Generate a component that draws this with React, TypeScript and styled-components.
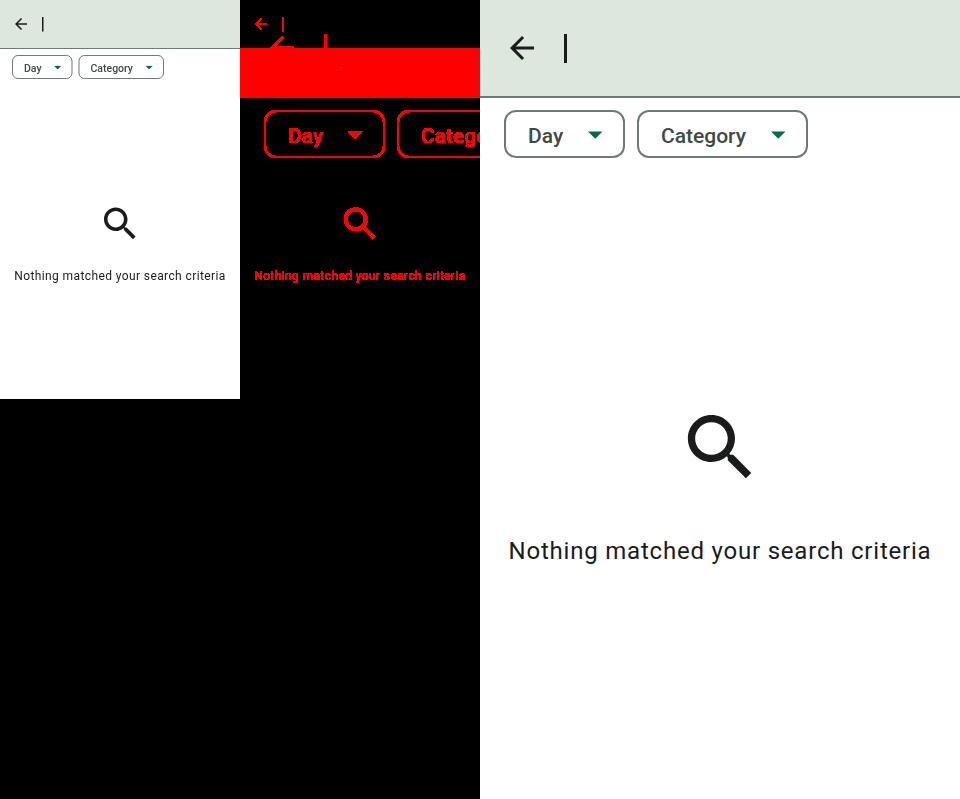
import React from "react";
import styled, { createGlobalStyle, ThemeProvider } from "styled-components";

const GlobalStyle = createGlobalStyle`
  body { margin: 0; background: #000; overflow: hidden; }
  * { box-sizing: border-box; }
`;

const plain = {
  page: "#fff",
  bar: "#dde7de",
  line: "#707973",
  ink: "#191c1a",
  label: "#404943",
  accent: "#006c4e",
};

const marked = {
  page: "transparent",
  bar: "transparent",
  line: "#f00",
  ink: "#f00",
  label: "#f00",
  accent: "#f00",
};

const Board = styled.main`
  display: grid;
  grid-template-columns: 240px 240px 480px;
  width: 960px;
  height: 799px;
  background: #000;
`;

const Pane = styled.section<{ $height: number }>`
  height: ${(p) => p.$height}px;
  overflow: hidden;
`;

const DiffPane = styled(Pane)`
  display: grid;
  grid-template: 799px / 240px;
  background: #000;
`;

const Layer = styled.div<{ $height: number }>`
  grid-area: 1 / 1;
  height: ${(p) => p.$height}px;
  overflow: hidden;
  filter: url(#solid-alpha);
`;

const Band = styled.div`
  grid-area: 1 / 1;
  margin-top: 48px;
  height: 50px;
  background: #f00;
  z-index: 1;
`;

const Speck = styled.div`
  width: 1px;
  height: 1px;
  margin: 23px 0 0 98px;
  background: #000;
`;

const FilterDefs = styled.svg`
  position: absolute;
  width: 0;
  height: 0;
`;

const Screen = styled.div<{ $scale: number }>`
  width: 480px;
  height: 799px;
  background: ${(p) => p.theme.page};
  font-family: Roboto, "Liberation Sans", sans-serif;
  transform: scale(${(p) => p.$scale});
  transform-origin: 0 0;
`;

const SearchBar = styled.header`
  display: flex;
  align-items: center;
  height: 98px;
  padding-left: 24px;
  background: ${(p) => p.theme.bar};
  border-bottom: 2px solid ${(p) => p.theme.line};
`;

const BackIcon = styled.svg`
  width: 36px;
  height: 36px;
  fill: ${(p) => p.theme.ink};
`;

const Cursor = styled.div`
  width: 3px;
  height: 29px;
  margin: 1px 0 0 24px;
  background: ${(p) => p.theme.ink};
`;

const Filters = styled.div`
  display: flex;
  gap: 12px;
  height: 60px;
  padding: 12px 24px 0;
`;

const Chip = styled.button<{ $width: number }>`
  display: flex;
  align-items: center;
  justify-content: space-between;
  flex: none;
  width: ${(p) => p.$width}px;
  height: 48px;
  padding: 3px 20px 0 22px;
  border: 2px solid ${(p) => p.theme.line};
  border-radius: 12px;
  background: transparent;
  color: ${(p) => p.theme.label};
  font: 500 21px/30px Roboto, "Liberation Sans", sans-serif;
  letter-spacing: 0;
`;

const Caret = styled.svg`
  width: 15px;
  height: 8px;
  margin-top: -2px;
  fill: ${(p) => p.theme.accent};
`;

const Empty = styled.div`
  display: flex;
  flex-direction: column;
  align-items: center;
  padding-top: 246px;
`;

const SearchIcon = styled.svg`
  width: 87px;
  height: 87px;
  fill: ${(p) => p.theme.ink};
`;

const Message = styled.p`
  margin: 42.4px 0 0;
  color: ${(p) => p.theme.ink};
  font-size: 24px;
  line-height: 36px;
  letter-spacing: 0.79px;
  white-space: nowrap;
`;

function FilterChip({ label, width }: { label: string; width: number }) {
  return (
    <Chip $width={width}>
      {label}
      <Caret viewBox="0 0 15 8">
        <path d="M0 0.5h14.5L7.25 7.75z" />
      </Caret>
    </Chip>
  );
}

type ScreenProps = {
  scale: number;
  diff?: boolean;
  chips?: boolean;
  empty?: boolean;
};

function SearchScreen({ scale, diff = false, chips = true, empty = true }: ScreenProps) {
  return (
    <ThemeProvider theme={diff ? marked : plain}>
      <Screen $scale={scale}>
        <SearchBar>
          <BackIcon viewBox="0 0 24 24">
            <path d="M20 11H7.83l5.59-5.59L12 4l-8 8 8 8 1.41-1.41L7.83 13H20v-2z" />
          </BackIcon>
          <Cursor />
        </SearchBar>
        <Filters>
          {chips && <FilterChip label="Day" width={121} />}
          {chips && <FilterChip label="Category" width={171} />}
        </Filters>
        {empty && (
          <Empty>
            <SearchIcon viewBox="0 0 24 24">
              <path d="M15.5 14h-.79l-.28-.27C15.41 12.59 16 11.11 16 9.5 16 5.91 13.09 3 9.5 3S3 5.91 3 9.5 5.91 16 9.5 16c1.61 0 3.09-.59 4.23-1.57l.27.28v.79l5 4.99L20.49 19l-4.99-5zm-6 0C7.01 14 5 11.99 5 9.5S7.01 5 9.5 5 14 7.01 14 9.5 11.99 14 9.5 14z" />
            </SearchIcon>
            <Message>Nothing matched your search criteria</Message>
          </Empty>
        )}
      </Screen>
    </ThemeProvider>
  );
}

export default function App() {
  return (
    <Board>
      <GlobalStyle />
      <FilterDefs>
        <filter id="solid-alpha" x="0" y="0" width="1" height="1" colorInterpolationFilters="sRGB">
          <feComponentTransfer>
            <feFuncA type="linear" slope="60" intercept="-1" />
          </feComponentTransfer>
        </filter>
      </FilterDefs>
      <Pane $height={399}>
        <SearchScreen scale={0.5} />
      </Pane>
      <DiffPane $height={799}>
        <Layer $height={399}>
          <SearchScreen scale={0.5} diff chips={false} />
        </Layer>
        <Layer $height={170}>
          <SearchScreen scale={1} diff empty={false} />
        </Layer>
        <Band>
          <Speck />
        </Band>
      </DiffPane>
      <Pane $height={799}>
        <SearchScreen scale={1} />
      </Pane>
    </Board>
  );
}
